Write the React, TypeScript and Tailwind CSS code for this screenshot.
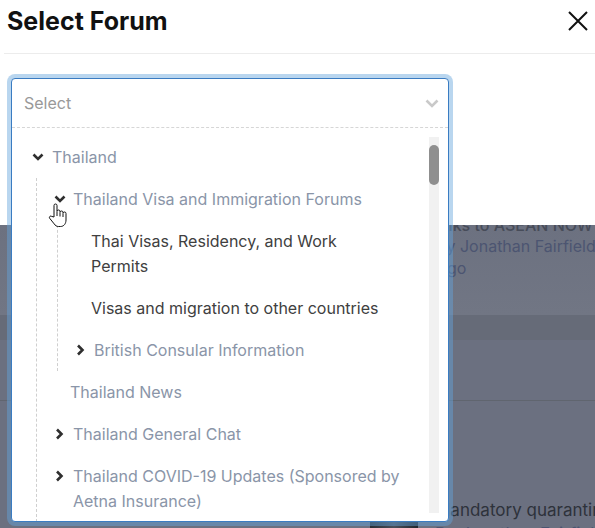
function Chevron({ dir, className }: { dir: "down" | "right"; className?: string }) {
  if (dir === "down") {
    return (
      <svg width="12" height="8" viewBox="0 0 12 8" className={className}>
        <polyline points="1.5,1.5 6,6 10.5,1.5" fill="none" stroke="currentColor" strokeWidth="2.6" />
      </svg>
    );
  }
  return (
    <svg width="12" height="12" viewBox="0 0 12 12" className={className}>
      <polyline points="4,1.5 8.5,6 4,10.5" fill="none" stroke="currentColor" strokeWidth="2.6" />
    </svg>
  );
}

function Branch({
  label,
  open,
  className,
}: {
  label: string;
  open?: boolean;
  className?: string;
}) {
  return (
    <div className={`flex items-start gap-[8px] py-[8.5px] ${className ?? ""}`}>
      <div className="flex h-[25px] w-[12px] shrink-0 items-center justify-center text-[#2f2f2f]">
        <Chevron dir={open ? "down" : "right"} />
      </div>
      <span className="text-[#8a95a8]">{label}</span>
    </div>
  );
}

function HandCursor() {
  return (
    <svg width="19" height="25" viewBox="0 0 19 25" className="absolute left-[48px] top-[203px]">
      <path
        d="M6 14 V2.5 a1.5 1.5 0 0 1 3 0 V8.5 a1.5 1.5 0 0 1 3 0 V9.5 a1.5 1.5 0 0 1 3 0 V10.5 a1.5 1.5 0 0 1 3 0 V17 c0 3.5 -2 6.5 -5.5 6.5 H10.5 c-2 0 -3.2 -1 -4.3 -2.6 L1.6 15.2 a1.4 1.4 0 0 1 2.1 -1.8 Z"
        fill="#fff"
        stroke="#111"
        strokeWidth="1"
        strokeLinejoin="round"
      />
      <path d="M9 9 V13 M12 10 V13.5 M15 11 V14" stroke="#111" strokeWidth="1" fill="none" />
    </svg>
  );
}

export default function App() {
  return (
    <div className="relative h-[528px] w-[595px] overflow-hidden bg-[#6b7080] font-['Inter',sans-serif]">
      {/* Modal header */}
      <div className="h-[225px] bg-white">
        <div className="flex h-[37px] items-center justify-between px-[7px] pt-[5px]">
          <h1 className="text-[25px] font-bold leading-[32px] text-[#111]">Select Forum</h1>
          <svg width="20" height="20" viewBox="0 0 20 20">
            <path d="M1 1 L19 19 M19 1 L1 19" stroke="#111" strokeWidth="2" />
          </svg>
        </div>
        <div className="ml-[4px] mt-[16px] h-px bg-[#ececec]" />
      </div>

      {/* Page behind the overlay */}
      <div className="flow-root overflow-hidden">
        <div className="flow-root h-[90px] bg-gradient-to-b from-[#6c7180] to-[#717684] text-[16px] leading-[24px]">
          <div className="ml-[443px] mt-[-12px] whitespace-nowrap font-medium text-[#474c59]">nks to ASEAN NOW</div>
          <div className="ml-[436px] mt-[-3px] whitespace-nowrap text-[#4c5571]">By Jonathan Fairfield</div>
          <div className="ml-[438px] mt-[-2px] whitespace-nowrap text-[#4c5571]">ago</div>
        </div>
        <div className="h-[25px] bg-[#666b78]" />
        <div className="h-[60px] bg-[#6b7080]" />
        <div className="h-px bg-[#60656f]" />
        <div className="h-[97px]" />
        <div className="flex items-start">
          <div className="ml-[370px] mt-[17px] h-[40px] w-[48px] shrink-0 bg-gradient-to-r from-[#2b2e35] via-[#4a4f5a] to-[#23262c]" />
          <div className="ml-[17px] shrink-0 whitespace-nowrap text-[17px] leading-[24px] text-[#2e323b]">
            Mandatory quarantine
            <div className="text-[#4c5571]">By Jonathan Fairfield</div>
          </div>
        </div>
      </div>

      {/* Open select */}
      <div className="absolute left-[11px] top-[78px] h-[444px] w-[438px] rounded-[4px] border border-[#3a7cc2] bg-white shadow-[0_0_0_4px_rgba(100,165,220,0.45)]">
        <div className="flex h-[49px] items-center justify-between border-b border-dashed border-[#d6d6d6] pl-[12px] pr-[9px]">
          <span className="text-[16px] text-[#999]">Select</span>
          <svg width="14" height="9" viewBox="0 0 14 9">
            <polyline points="1.5,1.5 7,7 12.5,1.5" fill="none" stroke="#c9c9c9" strokeWidth="2.6" />
          </svg>
        </div>

        <div className="relative h-[393px] overflow-hidden pr-[30px] pt-[8px] text-[16px] leading-[25px]">
          <Branch label="Thailand" open className="pl-[20px]" />
          <div className="ml-[24px] border-l border-dashed border-[#cfcfcf]">
            <div className="flex items-start gap-[7px] py-[8.5px] pl-[17px]">
              <div className="flex h-[25px] w-[12px] shrink-0 items-center justify-center text-[#2f2f2f]">
                <Chevron dir="down" />
              </div>
              <span className="text-[#8a95a8]">Thailand Visa and Immigration Forums</span>
            </div>
            <div className="ml-[20px] border-l border-dashed border-[#cfcfcf]">
              <div className="w-[300px] py-[8.5px] pl-[33px] text-[#404040]">
                Thai Visas, Residency, and Work Permits
              </div>
              <div className="py-[8.5px] pl-[33px] text-[#404040]">Visas and migration to other countries</div>
              <Branch label="British Consular Information" className="pl-[16px]" />
            </div>
            <div className="py-[8.5px] pl-[33px] text-[#8a95a8]">Thailand News</div>
            <Branch label="Thailand General Chat" className="pl-[16px]" />
            <Branch label="Thailand COVID-19 Updates (Sponsored by Aetna Insurance)" className="pl-[16px]" />
          </div>

          {/* Scrollbar */}
          <div className="absolute bottom-[8px] right-[9px] top-[9px] w-[10px] bg-[#f1f1f1]">
            <div className="mt-[8px] h-[40px] rounded-[5px] bg-[#8f8f8f]" />
          </div>
        </div>
      </div>

      <HandCursor />
    </div>
  );
}
